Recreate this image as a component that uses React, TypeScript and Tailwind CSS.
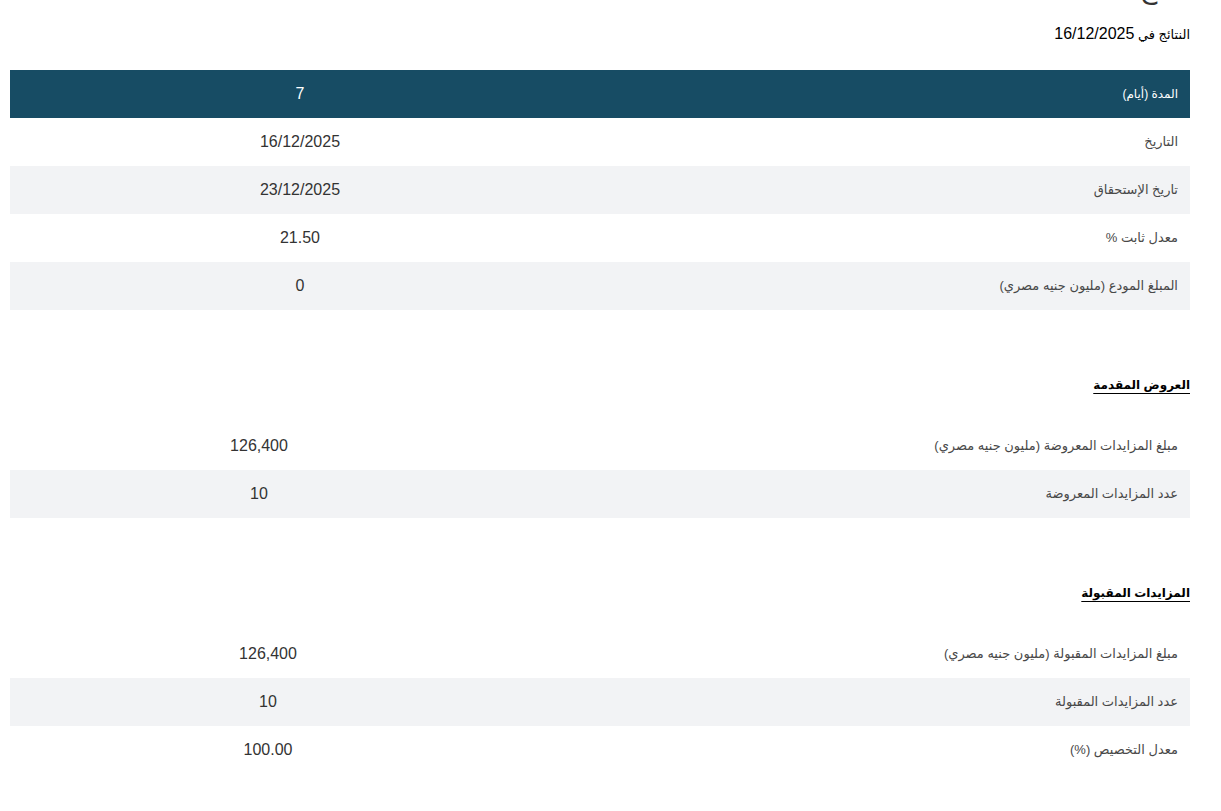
import React from "react";

interface Row {
  label: string;
  value: string;
}

const summaryRows: Row[] = [
  { label: "التاريخ", value: "16/12/2025" },
  { label: "تاريخ الإستحقاق", value: "23/12/2025" },
  { label: "معدل ثابت %", value: "21.50" },
  { label: "المبلغ المودع (مليون جنيه مصري)", value: "0" },
];

const offeredRows: Row[] = [
  { label: "مبلغ المزايدات المعروضة (مليون جنيه مصري)", value: "126,400" },
  { label: "عدد المزايدات المعروضة", value: "10" },
];

const acceptedRows: Row[] = [
  { label: "مبلغ المزايدات المقبولة (مليون جنيه مصري)", value: "126,400" },
  { label: "عدد المزايدات المقبولة", value: "10" },
  { label: "معدل التخصيص (%)", value: "100.00" },
];

const font = "font-['Liberation_Sans','DejaVu_Sans',sans-serif]";

function ResultTable({
  rows,
  valueWidth,
  header,
}: {
  rows: Row[];
  valueWidth: string;
  header?: Row;
}) {
  return (
    <table className="w-full border-collapse table-fixed">
      <colgroup>
        <col />
        <col className={valueWidth} />
      </colgroup>
      <tbody>
        {header && (
          <tr className="h-12 bg-[#174c64] text-white">
            <td className="pr-3 text-right text-[12px]">{header.label}</td>
            <td className="text-center text-[16px]">{header.value}</td>
          </tr>
        )}
        {rows.map((row, i) => (
          <tr key={row.label} className={`h-12 ${i % 2 === 1 ? "bg-[#f2f3f5]" : "bg-white"}`}>
            <td className="pr-3 text-right text-[13px] text-[#484848]">{row.label}</td>
            <td className="text-center text-[16px] text-[#333]">{row.value}</td>
          </tr>
        ))}
      </tbody>
    </table>
  );
}

function SectionTitle({ children }: { children: React.ReactNode }) {
  return (
    <h3 className="mt-[65px] mb-[27px] h-5 leading-5 text-[12px] font-bold text-black underline underline-offset-4">
      {children}
    </h3>
  );
}

export default function App() {
  return (
    <div dir="rtl" className={`min-h-screen bg-white pl-[10px] pr-[31px] ${font}`}>
      {/* page title, scrolled mostly out of view */}
      <h2 className="-mt-[30px] h-[38px] leading-[38px] text-[28px] text-[#333]">نتائج</h2>
      <p className="mt-4 h-5 leading-5 text-[13px] text-black">
        النتائج في <span className="text-[16px]">16/12/2025</span>
      </p>
      <div className="mt-[26px]">
        <ResultTable header={{ label: "المدة (أيام)", value: "7" }} rows={summaryRows} valueWidth="w-[580px]" />
      </div>

      <SectionTitle>العروض المقدمة</SectionTitle>
      <ResultTable rows={offeredRows} valueWidth="w-[498px]" />

      <SectionTitle>المزايدات المقبولة</SectionTitle>
      <ResultTable rows={acceptedRows} valueWidth="w-[516px]" />
    </div>
  );
}
